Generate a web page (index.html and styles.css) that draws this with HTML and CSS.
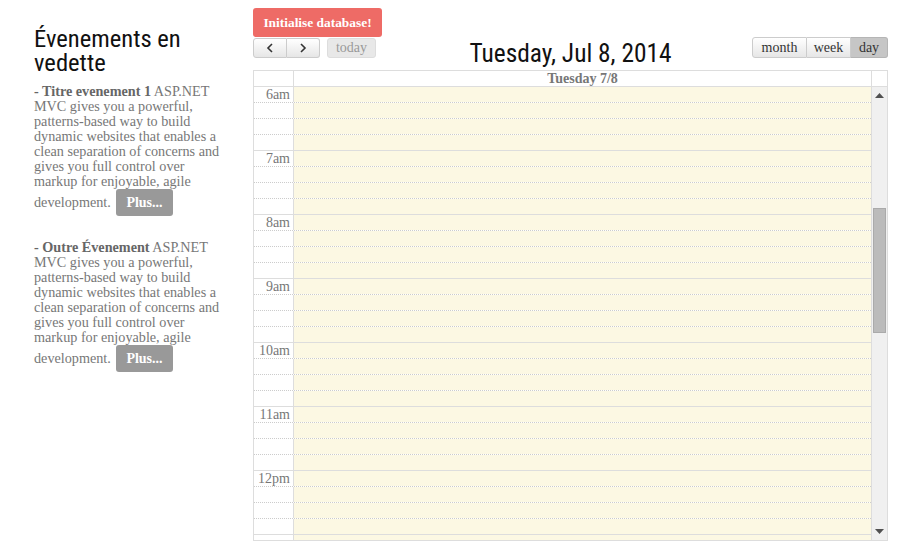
FILE: index.html
```html
<!DOCTYPE html>
<html>
<head>
<meta charset="utf-8">
<link rel="stylesheet" href="styles.css">
</head>
<body>
<div class="page">
  <aside class="side">
    <h2 class="side-title">Évenements en vedette</h2>
    <p class="event"><b>- Titre evenement 1</b> ASP.NET MVC gives you a powerful, patterns-based way to build dynamic websites that enables a clean separation of concerns and gives you full control over markup for enjoyable, agile development. <a class="more">Plus...</a></p>
    <p class="event"><b>- Outre Évenement</b> ASP.NET MVC gives you a powerful, patterns-based way to build dynamic websites that enables a clean separation of concerns and gives you full control over markup for enjoyable, agile development. <a class="more">Plus...</a></p>
  </aside>
  <main class="main">
    <button class="init">Initialise database!</button>
    <div class="toolbar">
      <div class="tb-left">
        <div class="group">
          <span class="btn arrow"><svg width="10" height="10" viewBox="0 0 10 10"><path d="M7 1 L3 5 L7 9" fill="none" stroke="#333" stroke-width="1.6"/></svg></span><span class="btn arrow"><svg width="10" height="10" viewBox="0 0 10 10"><path d="M3 1 L7 5 L3 9" fill="none" stroke="#333" stroke-width="1.6"/></svg></span>
        </div>
        <span class="btn today">today</span>
      </div>
      <h2 class="title">Tuesday, Jul 8, 2014</h2>
      <div class="tb-right">
        <div class="group">
          <span class="btn month">month</span><span class="btn week">week</span><span class="btn day active">day</span>
        </div>
      </div>
    </div>
    <div class="cal">
      <div class="cal-head">
        <div class="axis-h"></div>
        <div class="day-h">Tuesday 7/8</div>
        <div class="sb-h"></div>
      </div>
      <div class="cal-body">
        <div class="grid" id="grid"></div>
        <div class="scrollbar">
          <div class="sb-arrow"><svg width="9" height="5" viewBox="0 0 9 5"><path d="M0 5 L4.5 0 L9 5 Z" fill="#505050"/></svg></div>
          <div class="sb-track"><div class="sb-thumb"></div></div>
          <div class="sb-arrow"><svg width="9" height="5" viewBox="0 0 9 5"><path d="M0 0 L9 0 L4.5 5 Z" fill="#505050"/></svg></div>
        </div>
      </div>
    </div>
  </main>
</div>
<script>
  var labels = ['6am','7am','8am','9am','10am','11am','12pm',''];
  var g = document.getElementById('grid');
  var html = '';
  for (var i = 0; i < 29; i++) {
    var hour = i % 4 === 0;
    html += '<div class="slot' + (hour ? ' hour' : '') + '"><div class="ax">' + (hour ? labels[i/4] : '') + '</div><div class="cell"></div></div>';
  }
  g.innerHTML = html;
</script>
</body>
</html>
```
FILE: styles.css
```css
* { box-sizing: border-box; }
body {
  margin: 0;
  font-family: "Liberation Serif", serif;
  color: #777;
  background: #fff;
}
.page {
  display: flex;
  align-items: flex-start;
}
.side {
  width: 253px;
  flex-shrink: 0;
  padding: 27px 0 0 34px;
}
.side-title {
  font-family: "Liberation Sans Narrow", "Roboto Condensed", Roboto, sans-serif;
  font-weight: normal;
  font-size: 24.6px;
  line-height: 24px;
  color: #111;
  margin: 0 0 9px 0;
  width: 190px;
}
.event {
  width: 190px;
  margin: 0 0 24px 0;
  font-size: 14.2px;
  line-height: 15px;
  color: #777;
}
.event b { color: #666; }
.more {
  display: inline-block;
  margin-left: 2px;
  background: #999;
  color: #fff;
  font-weight: bold;
  font-size: 14px;
  line-height: 15px;
  padding: 6px 10px;
  border-radius: 3px;
}
.main {
  width: 635px;
  flex-shrink: 0;
  padding-top: 8px;
}
.init {
  display: block;
  height: 29px;
  width: 129px;
  border: 0;
  border-radius: 3px;
  background: #ee6b66;
  color: #fff;
  font-family: "Liberation Serif", serif;
  font-weight: bold;
  font-size: 13.4px;
  padding: 0;
}
.toolbar {
  display: grid;
  grid-template-columns: 1fr auto 1fr;
  align-items: start;
  height: 33px;
}
.tb-left { display: flex; gap: 7px; padding-top: 1px; }
.tb-right { display: flex; justify-content: flex-end; }
.group { display: flex; }
.btn {
  display: inline-flex;
  align-items: center;
  justify-content: center;
  height: 20px;
  padding: 0;
  border: 1px solid #ccc;
  border-left-width: 0;
  background: linear-gradient(#fff, #e6e6e6);
  color: #333;
  font-size: 14px;
}
.group .btn:first-child { border-left-width: 1px; border-radius: 3px 0 0 3px; }
.group .btn:last-child { border-radius: 0 3px 3px 0; }
.arrow { width: 33px; }
.group .arrow:first-child { width: 34px; }
.today {
  border-left-width: 1px;
  border-radius: 3px;
  width: 49px;
  color: #999;
  background: #e8e8e8;
  border-color: #ddd;
}
.tb-right .btn { height: 21px; }
.month { width: 55px; }
.week { width: 44px; }
.day { width: 37px; }
.active { background: #c6c6c6; border-color: #b5b5b5; }
.title {
  font-family: "Liberation Sans Narrow", "Roboto Condensed", Roboto, sans-serif;
  font-weight: normal;
  font-size: 25.4px;
  line-height: 28px;
  color: #111;
  margin: 2px 0 0 0;
}
.cal {
  border: 1px solid #ddd;
  width: 635px;
}
.cal-head {
  display: flex;
  height: 16px;
  border-bottom: 1px solid #ddd;
}
.axis-h { width: 40px; border-right: 1px solid #ddd; }
.day-h {
  flex: 1;
  text-align: center;
  font-weight: bold;
  font-size: 14px;
  line-height: 15px;
  color: #777;
}
.sb-h { width: 16px; border-left: 1px solid #ddd; }
.cal-body {
  display: flex;
  height: 453px;
  overflow: hidden;
}
.grid { flex: 1; }
.slot {
  display: flex;
  height: 16px;
  border-top: 1px dotted #ccc;
}
.slot:first-child { border-top: 0; height: 15px; }
.slot.hour { border-top-style: solid; border-top-color: #ddd; }
.ax {
  width: 40px;
  border-right: 1px solid #ddd;
  text-align: right;
  padding-right: 3px;
  font-size: 14px;
  line-height: 15px;
  color: #777;
  background: #fff;
}
.cell { flex: 1; background: #fcf8e3; }
.scrollbar {
  width: 16px;
  border-left: 1px solid #ddd;
  background: #f0f0f0;
  display: flex;
  flex-direction: column;
}
.sb-arrow {
  height: 17px;
  display: flex;
  align-items: center;
  justify-content: center;
}
.sb-track { flex: 1; padding: 104px 1px 0 1px; }
.sb-thumb {
  height: 125px;
  background: #bbb;
  border: 1px solid #aaa;
}
```
